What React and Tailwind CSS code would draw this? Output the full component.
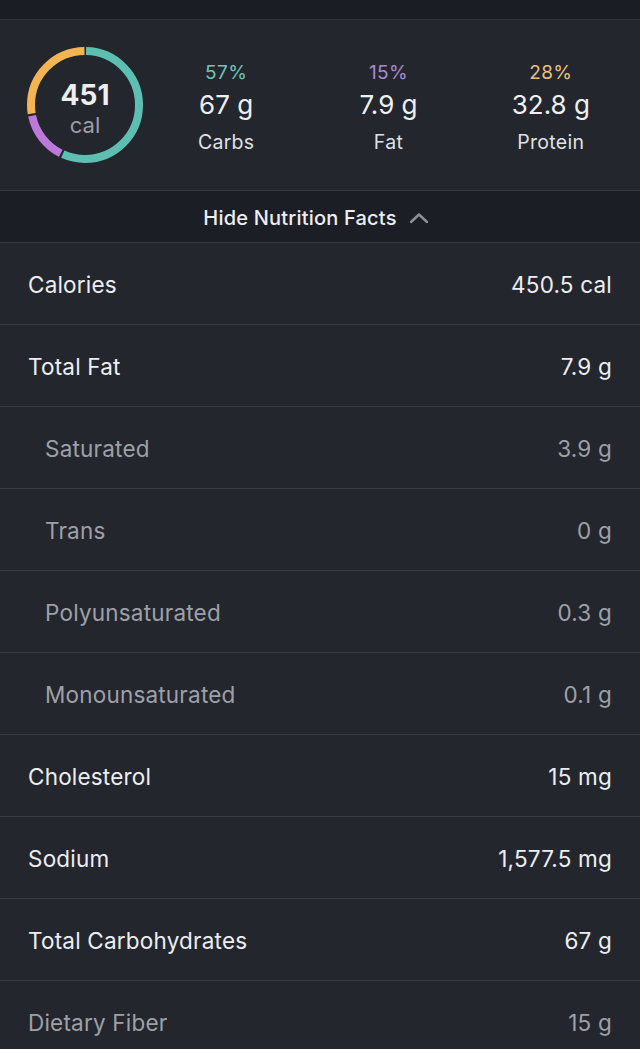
import React from 'react'

const rows = [
  { label: 'Calories', value: '450.5 cal' },
  { label: 'Total Fat', value: '7.9 g' },
  { label: 'Saturated', value: '3.9 g', sub: true },
  { label: 'Trans', value: '0 g', sub: true },
  { label: 'Polyunsaturated', value: '0.3 g', sub: true },
  { label: 'Monounsaturated', value: '0.1 g', sub: true },
  { label: 'Cholesterol', value: '15 mg' },
  { label: 'Sodium', value: '1,577.5 mg' },
  { label: 'Total Carbohydrates', value: '67 g' },
  { label: 'Dietary Fiber', value: '15 g', muted: true },
]

const macros = [
  { pct: '57%', amount: '67 g', name: 'Carbs', color: 'text-[#6ec4b8]' },
  { pct: '15%', amount: '7.9 g', name: 'Fat', color: 'text-[#a98bcf]' },
  { pct: '28%', amount: '32.8 g', name: 'Protein', color: 'text-[#e8c17d]' },
]

// arcs in percent of the ring, clockwise from 12 o'clock
const arcs = [
  { from: 0, to: 57, color: '#5dbfb1' },
  { from: 57, to: 72, color: '#bb7ad9' },
  { from: 72, to: 100, color: '#f3b553' },
]

function Ring() {
  const r = 54
  const c = 2 * Math.PI * r
  const gap = 2.2
  return (
    <div className="relative w-[120px] h-[120px] shrink-0">
      <svg width="120" height="120" viewBox="0 0 120 120" className="-rotate-90">
        {arcs.map(a => {
          const len = ((a.to - a.from) / 100) * c - gap
          const off = (a.from / 100) * c + gap / 2
          return (
            <circle key={a.color} cx="60" cy="60" r={r} fill="none" stroke={a.color} strokeWidth="8"
              strokeDasharray={`${len} ${c - len}`} strokeDashoffset={-off} />
          )
        })}
      </svg>
      <div className="absolute inset-0 flex flex-col items-center justify-center pt-[8px]">
        <span className="text-[28px] leading-[30px] font-bold text-[#eceef2]">451</span>
        <span className="text-[22px] leading-[28px] mt-[1px] text-[#9b9da4]">cal</span>
      </div>
    </div>
  )
}

export default function App() {
  return (
    <div className="w-[640px] min-h-[1049px] bg-[#24262e] text-[#eceef2] overflow-hidden"
      style={{ fontFamily: 'Inter, "Noto Sans", sans-serif' }}>
      <div className="h-[20px] bg-[#1b1d24] border-b border-[#30323a]" />

      <div className="h-[171px] flex items-center pl-[25px] pr-[8px] border-b border-[#383a42]">
        <Ring />
        <div className="flex-1 grid grid-cols-3 mt-[6px]">
          {macros.map(m => (
            <div key={m.name} className="flex flex-col items-center">
              <span className={`text-[19px] leading-[22px] tracking-[0.4px] ${m.color}`}>{m.pct}</span>
              <span className="text-[26px] leading-[32px] mt-[5px] text-[#eef0f3]">{m.amount}</span>
              <span className="text-[19.5px] leading-[24px] mt-[9px] tracking-[0.3px] text-[#dfe1e5]">{m.name}</span>
            </div>
          ))}
        </div>
      </div>

      <div className="h-[52px] bg-[#1c1e25] border-b border-[#383a42] flex items-center justify-center gap-[12px] pr-[8px] pt-[2px]">
        <span className="text-[20px] font-medium tracking-[0.2px] text-[#eceef2]">Hide Nutrition Facts</span>
        <svg width="20" height="12" viewBox="0 0 20 12" fill="none">
          <path d="M2 10 L10 2.5 L18 10" stroke="#8e9098" strokeWidth="2.4" strokeLinecap="round" strokeLinejoin="round" />
        </svg>
      </div>

      {rows.map(row => {
        const tone = row.sub || row.muted ? 'text-[#9ea0a8]' : 'text-[#eceef2]'
        return (
          <div key={row.label}
            className={`h-[82px] flex items-center justify-between pr-[28px] pt-[3px] border-b border-[#383a42] ${row.sub ? 'pl-[45px]' : 'pl-[28px]'}`}>
            <span className={`text-[22.5px] tracking-[0.2px] ${tone}`}>{row.label}</span>
            <span className={`text-[22.5px] tracking-[0.2px] ${tone}`}>{row.value}</span>
          </div>
        )
      })}
    </div>
  )
}
